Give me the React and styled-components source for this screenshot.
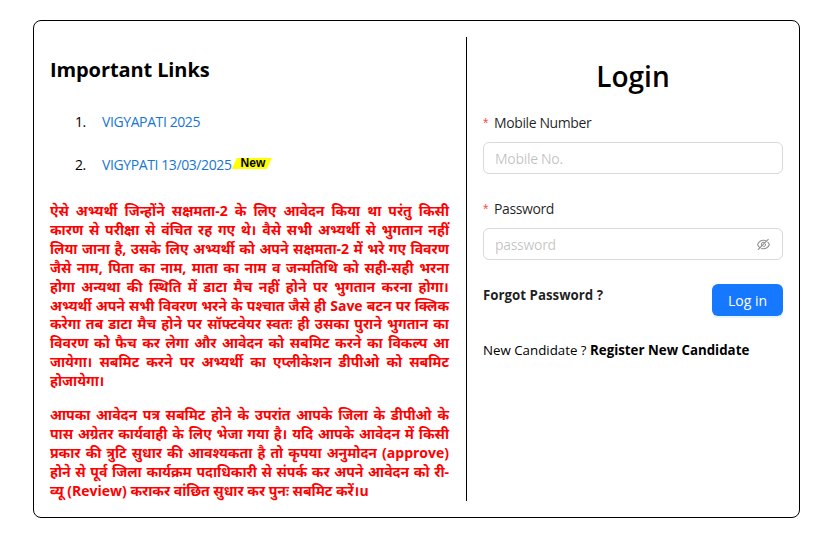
import React from 'react'
import styled, { createGlobalStyle } from 'styled-components'
import { AiOutlineEyeInvisible } from 'react-icons/ai'

const Global = createGlobalStyle`
  * { box-sizing: border-box; }
  html, body { margin: 0; background: #fff; }
  body {
    font-family: "Open Sans", "Noto Sans", "Liberation Sans", sans-serif;
    color: #000;
  }
`

const Page = styled.div`
  width: 837px;
  height: 541px;
  padding: 20px 37px 23px 33px;
`

const Card = styled.div`
  height: 498px;
  border: 1px solid #000;
  border-radius: 8px;
  padding: 16px;
  display: grid;
  grid-template-columns: 417px minmax(0, 1fr);
`

const LeftColumn = styled.section`
  border-right: 1px solid #000;
  padding-right: 17px;
  height: 464px;
`

const RightColumn = styled.section`
  padding-left: 16px;
`

const LinksTitle = styled.h2`
  margin: 19px 0 0;
  font-size: 20px;
  line-height: 28px;
  font-weight: 700;
  letter-spacing: -0.1px;
`

const LinkList = styled.ol`
  margin: 27px 0 26px;
  padding: 0 0 0 39px;
  list-style: decimal;
  font-size: 14px;
  line-height: 22px;
  letter-spacing: -0.4px;
  & li { margin-bottom: 21px; padding-left: 13px; }
  & li:last-child { margin-bottom: 0; }
  & li::marker { color: #000; }
`

const LinkText = styled.a`
  color: #1677d2;
  text-decoration: none;
`

const NewBadge = styled.span`
  display: inline-block;
  margin-left: 1px;
  padding: 0 4px 0 6px;
  height: 11px;
  line-height: 10px;
  font-family: "Liberation Sans", sans-serif;
  font-size: 12px;
  font-weight: 700;
  letter-spacing: 0;
  color: #000;
  background: #ffff00;
  transform: skewX(-24deg) translateY(-3px);
  & > span { display: inline-block; transform: skewX(24deg); }
`

const Notice = styled.p`
  margin: 0 0 15px;
  color: #f00;
  font-size: 14px;
  line-height: 18.9px;
  font-weight: 700;
  text-align: justify;
`

const LoginTitle = styled.h1`
  margin: 19px 0 0;
  text-align: center;
  font-size: 28px;
  line-height: 40px;
  font-weight: 600;
`

const Field = styled.div`
  margin-top: ${(p) => p.$top}px;
`

const FieldLabel = styled.label`
  display: block;
  font-size: 14px;
  line-height: 22px;
  letter-spacing: -0.4px;
  color: rgba(0, 0, 0, 0.88);
  margin-bottom: 8px;
`

const Req = styled.span`
  color: #ff4d4f;
  margin-right: 6px;
  font-family: "Liberation Sans", sans-serif;
`

const InputBox = styled.div`
  height: 32px;
  border: 1px solid #d9d9d9;
  border-radius: 6px;
  padding: 0 11px;
  display: flex;
  align-items: center;
  justify-content: space-between;
  background: #fff;
`

const Input = styled.input`
  flex: 1;
  min-width: 0;
  border: 0;
  outline: 0;
  padding: 0;
  font: inherit;
  font-size: 14px;
  letter-spacing: -0.3px;
  &::placeholder { color: rgba(0, 0, 0, 0.25); }
`

const EyeIcon = styled(AiOutlineEyeInvisible)`
  width: 15px;
  height: 15px;
  color: rgba(0, 0, 0, 0.45);
  flex: none;
`

const ActionRow = styled.div`
  margin-top: 24px;
  display: flex;
  justify-content: space-between;
  align-items: flex-start;
`

const Forgot = styled.a`
  font-size: 13.3px;
  font-weight: 700;
  line-height: 22px;
  color: rgba(0, 0, 0, 0.88);
`

const LoginButton = styled.button`
  width: 71px;
  height: 32px;
  border: 0;
  border-radius: 6px;
  background: #1677ff;
  color: #fff;
  font: inherit;
  font-size: 14px;
  box-shadow: 0 2px 0 rgba(5, 145, 255, 0.1);
`

const RegisterRow = styled.p`
  margin: 23px 0 0;
  font-size: 13.3px;
  line-height: 22px;
  & b { font-weight: 700; }
`

export default function App() {
  return (
    <Page>
      <Global />
      <Card>
        <LeftColumn>
          <LinksTitle>Important Links</LinksTitle>
          <LinkList>
            <li><LinkText href="#">VIGYAPATI 2025</LinkText></li>
            <li>
              <LinkText href="#">VIGYPATI 13/03/2025</LinkText>
              <NewBadge><span>New</span></NewBadge>
            </li>
          </LinkList>
          <Notice>
            ऐसे अभ्यर्थी जिन्होंने सक्षमता-2 के लिए आवेदन किया था परंतु किसी कारण से परीक्षा से वंचित रह गए थे। वैसे सभी अभ्यर्थी से भुगतान नहीं लिया जाना है, उसके लिए अभ्यर्थी को अपने सक्षमता-2 में भरे गए विवरण जैसे नाम, पिता का नाम, माता का नाम व जन्मतिथि को सही-सही भरना होगा अन्यथा की स्थिति में डाटा मैच नहीं होने पर भुगतान करना होगा। अभ्यर्थी अपने सभी विवरण भरने के पश्चात जैसे ही Save बटन पर क्लिक करेगा तब डाटा मैच होने पर सॉफ्टवेयर स्वतः ही उसका पुराने भुगतान का विवरण को फैच कर लेगा और आवेदन को सबमिट करने का विकल्प आ जायेगा। सबमिट करने पर अभ्यर्थी का एप्लीकेशन डीपीओ को सबमिट होजायेगा।
          </Notice>
          <Notice>
            आपका आवेदन पत्र सबमिट होने के उपरांत आपके जिला के डीपीओ के पास अग्रेतर कार्यवाही के लिए भेजा गया है। यदि आपके आवेदन में किसी प्रकार की त्रुटि सुधार की आवश्यकता है तो कृपया अनुमोदन (approve) होने से पूर्व जिला कार्यक्रम पदाधिकारी से संपर्क कर अपने आवेदन को री-व्यू (Review) कराकर वांछित सुधार कर पुनः सबमिट करें।u
          </Notice>
        </LeftColumn>
        <RightColumn>
          <LoginTitle>Login</LoginTitle>
          <Field $top={16}>
            <FieldLabel><Req>*</Req>Mobile Number</FieldLabel>
            <InputBox><Input placeholder="Mobile No." /></InputBox>
          </Field>
          <Field $top={24}>
            <FieldLabel><Req>*</Req>Password</FieldLabel>
            <InputBox>
              <Input placeholder="password" type="password" />
              <EyeIcon />
            </InputBox>
          </Field>
          <ActionRow>
            <Forgot>Forgot Password ?</Forgot>
            <LoginButton>Log in</LoginButton>
          </ActionRow>
          <RegisterRow>New Candidate ? <b>Register New Candidate</b></RegisterRow>
        </RightColumn>
      </Card>
    </Page>
  )
}
